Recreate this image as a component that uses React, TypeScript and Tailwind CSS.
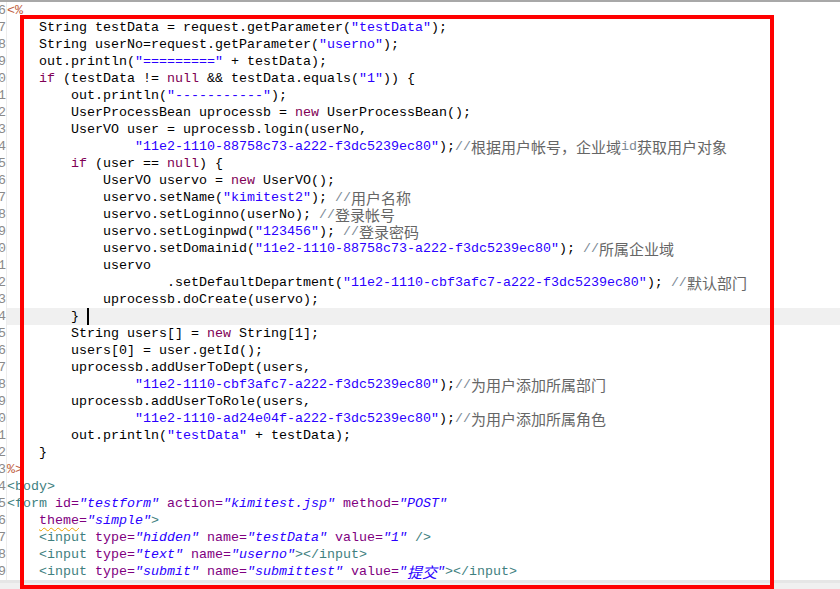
import React from "react";

type Tok = [string, string];

const CJK = "inline-block h-[17px] leading-[17px] align-top font-['Noto_Sans_CJK_SC',sans-serif] text-[15px]";

const CLS: Record<string, string> = {
  p: "text-black",
  k: "text-[#7f0055]",
  s: "text-[#2a00ff]",
  c: "text-[#7d8a96]",
  z: `text-[#666666] ${CJK}`,
  j: "text-[#bf5f3f]",
  g: "text-[#3f7f7f]",
  a: "text-[#7f007f]",
  v: "text-[#2a00ff] italic",
  vz: `text-[#2a00ff] italic ${CJK}`,
  w: "text-[#7f007f] underline decoration-wavy decoration-[#eea400] underline-offset-[3px] decoration-1",
};

const S16 = "                ";
const S12 = "            ";
const S8 = "        ";
const S4 = "    ";

const LINES: Tok[][] = [
  [["j", "<%"]],
  [["p", S4 + "String testData = request.getParameter("], ["s", '"testData"'], ["p", ");"]],
  [["p", S4 + "String userNo=request.getParameter("], ["s", '"userno"'], ["p", ");"]],
  [["p", S4 + "out.println("], ["s", '"========="'], ["p", " + testData);"]],
  [["p", S4], ["k", "if"], ["p", " (testData != "], ["k", "null"], ["p", " && testData.equals("], ["s", '"1"'], ["p", ")) {"]],
  [["p", S8 + "out.println("], ["s", '"-----------"'], ["p", ");"]],
  [["p", S8 + "UserProcessBean uprocessb = "], ["k", "new"], ["p", " UserProcessBean();"]],
  [["p", S8 + "UserVO user = uprocessb.login(userNo,"]],
  [["p", S16], ["s", '"11e2-1110-88758c73-a222-f3dc5239ec80"'], ["p", ");"], ["c", "//"], ["z", "根据用户帐号，企业域"], ["c", "id"], ["z", "获取用户对象"]],
  [["p", S8], ["k", "if"], ["p", " (user == "], ["k", "null"], ["p", ") {"]],
  [["p", S12 + "UserVO uservo = "], ["k", "new"], ["p", " UserVO();"]],
  [["p", S12 + "uservo.setName("], ["s", '"kimitest2"'], ["p", "); "], ["c", "//"], ["z", "用户名称"]],
  [["p", S12 + "uservo.setLoginno(userNo); "], ["c", "//"], ["z", "登录帐号"]],
  [["p", S12 + "uservo.setLoginpwd("], ["s", '"123456"'], ["p", "); "], ["c", "//"], ["z", "登录密码"]],
  [["p", S12 + "uservo.setDomainid("], ["s", '"11e2-1110-88758c73-a222-f3dc5239ec80"'], ["p", "); "], ["c", "//"], ["z", "所属企业域"]],
  [["p", S12 + "uservo"]],
  [["p", S12 + "        .setDefaultDepartment("], ["s", '"11e2-1110-cbf3afc7-a222-f3dc5239ec80"'], ["p", "); "], ["c", "//"], ["z", "默认部门"]],
  [["p", S12 + "uprocessb.doCreate(uservo);"]],
  [["p", S8 + "} "]],
  [["p", S8 + "String users[] = "], ["k", "new"], ["p", " String[1];"]],
  [["p", S8 + "users[0] = user.getId();"]],
  [["p", S8 + "uprocessb.addUserToDept(users,"]],
  [["p", S16], ["s", '"11e2-1110-cbf3afc7-a222-f3dc5239ec80"'], ["p", ");"], ["c", "//"], ["z", "为用户添加所属部门"]],
  [["p", S8 + "uprocessb.addUserToRole(users,"]],
  [["p", S16], ["s", '"11e2-1110-ad24e04f-a222-f3dc5239ec80"'], ["p", ");"], ["c", "//"], ["z", "为用户添加所属角色"]],
  [["p", S8 + "out.println("], ["s", '"testData"'], ["p", " + testData);"]],
  [["p", S4 + "}"]],
  [["j", "%>"]],
  [["g", "<body>"]],
  [["g", "<form"], ["p", " "], ["a", "id="], ["v", '"testform"'], ["p", " "], ["a", "action="], ["v", '"kimitest.jsp"'], ["p", " "], ["a", "method="], ["v", '"POST"']],
  [["p", S4], ["w", "theme"], ["a", "="], ["v", '"simple"'], ["g", ">"]],
  [["p", S4], ["g", "<input"], ["p", " "], ["a", "type="], ["v", '"hidden"'], ["p", " "], ["a", "name="], ["v", '"testData"'], ["p", " "], ["a", "value="], ["v", '"1"'], ["p", " "], ["g", "/>"]],
  [["p", S4], ["g", "<input"], ["p", " "], ["a", "type="], ["v", '"text"'], ["p", " "], ["a", "name="], ["v", '"userno"'], ["g", "></input>"]],
  [["p", S4], ["g", "<input"], ["p", " "], ["a", "type="], ["v", '"submit"'], ["p", " "], ["a", "name="], ["v", '"submittest"'], ["p", " "], ["a", "value="], ["v", '"'], ["vz", "提交"], ["v", '"'], ["g", "></input>"]],
];

const FIRST = 6;
const CURRENT = 24;

export default function App() {
  return (
    <div className="relative w-[840px] h-[589px] overflow-hidden bg-white flex flex-col font-['Liberation_Mono','Courier_New',monospace] text-[13.333px]">
      <div className="h-[2px] bg-[#a8a8a8] shrink-0" />
      <div className="flex flex-col shrink-0">
        {LINES.map((toks, i) => {
          const n = FIRST + i;
          const cur = n === CURRENT;
          return (
            <div key={n} className="flex h-[17px] min-h-0 max-h-[17px] shrink-0 leading-[17px]">
              <div className="w-[7px] shrink-0 flex justify-end overflow-hidden border-r border-[#ececec] text-[#8a8a8a]">
                <span className="whitespace-pre">{n}</span>
              </div>
              <div className={`flex-1 h-[17px] whitespace-pre ${cur ? "bg-[#f0f0f0]" : ""}`}>
                {toks.map((t, j) => (
                  <span key={j} className={CLS[t[0]]}>
                    {t[1]}
                  </span>
                ))}
                {cur && <span className="inline-block w-[2px] h-[17px] bg-black align-top" />}
              </div>
            </div>
          );
        })}
      </div>
      <div className="h-[9px] shrink-0 bg-[#f0f0f0] border-t-[3px] border-[#e6e6e6]" />
      <div className="absolute left-[20px] top-[15px] w-[754px] h-[574px] border-4 border-[#ff0000] pointer-events-none" />
    </div>
  );
}
